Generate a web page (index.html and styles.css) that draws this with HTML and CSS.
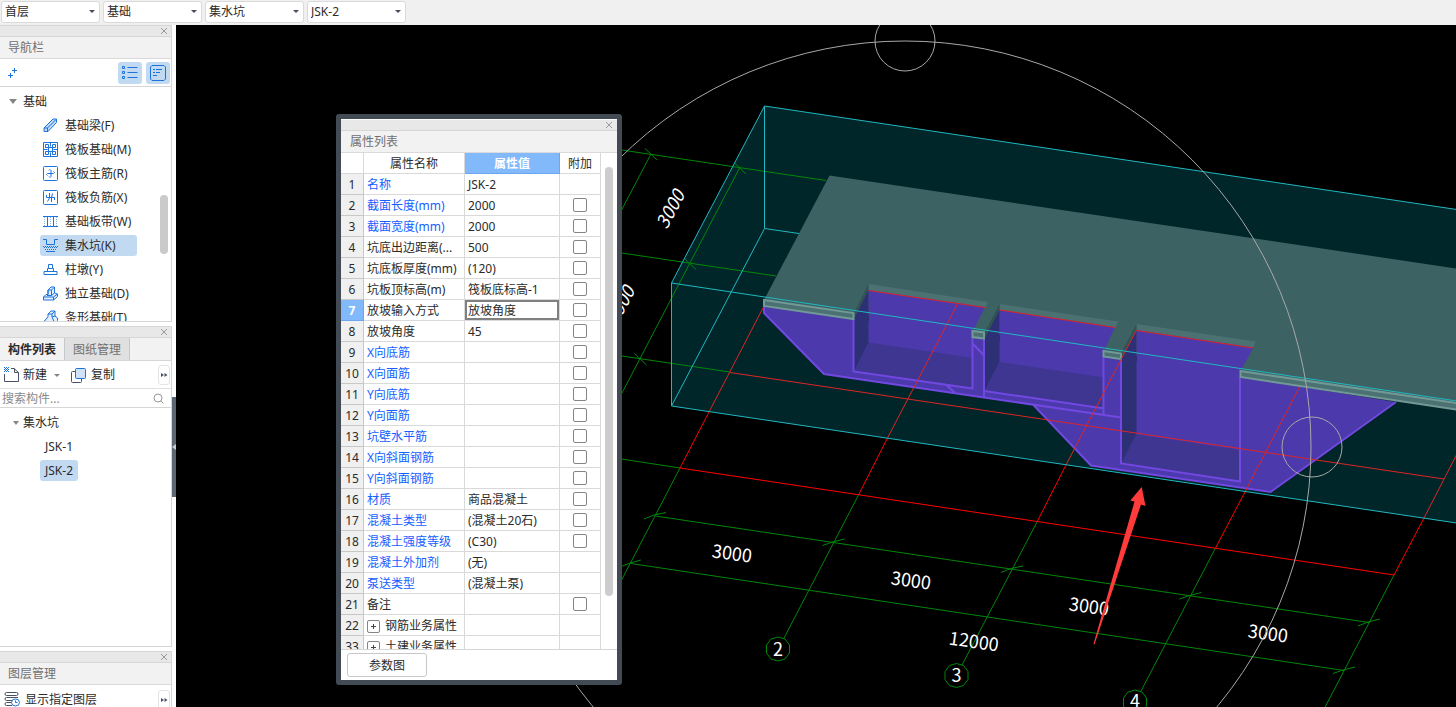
FILE: index.html
```
<!DOCTYPE html>
<html lang="zh-CN">
<head>
<meta charset="utf-8">
<title>集水坑 JSK-2</title>
<link rel="stylesheet" href="styles.css">
</head>
<body>
<header class="topbar">
  <span class="picker"><select aria-label="楼层"><option>首层</option></select></span>
  <span class="picker"><select aria-label="构件分类"><option>基础</option></select></span>
  <span class="picker"><select aria-label="构件类型"><option>集水坑</option></select></span>
  <span class="picker"><select aria-label="构件"><option>JSK-2</option></select></span>
</header>
<main class="workspace">
  <aside class="sidebar">
    <section class="panel panel-nav">
      <div class="grip"><button class="close" aria-label="关闭导航栏"><svg width="8" height="8" viewBox="0 0 8 8"><path d="M1 1l6 6M7 1l-6 6"/></svg></button></div>
      <h2 class="title">导航栏</h2>
      <div class="nav-tools">
        <button class="plain" aria-label="添加"><svg class="ico" width="10" height="12" viewBox="0 0 10 12"><path d="M6.500 1v5M4 3.500h5M2.500 6v5M0 8.500h5"/></svg></button>
        <button class="toggle" aria-label="列表"><svg class="ico" width="16" height="16" viewBox="0 0 16 16"><path d="M5.500 2.500h10M5.500 7.500h10M5.500 12.500h10M.5 1.500h2v2h-2zM.5 6.500h2v2h-2zM.5 11.500h2v2h-2z"/></svg></button>
        <button class="toggle" aria-label="详情"><svg class="ico" width="16" height="16" viewBox="0 0 16 16"><path d="M2 .5h12l1.500 1.500v12L14 15.500H2L.5 14V2z"/><path d="M3 4.500h2M6 4.500h6M3 7.500h2M6 7.500h4M3 10.500h4"/></svg></button>
      </div>
      <div class="tree nav-tree">
        <button class="branch"><i class="caret"></i>基础</button>
        <button class="leaf"><svg class="ico" width="15" height="15" viewBox="0 0 15 15"><path fill="#c2daf1" d="M1 13.500V10L10 1h3.500v3.500L5 13.500zM1 10h3.500v3.500M4.500 10L13 1.500"/></svg>基础梁(F)</button>
        <button class="leaf"><svg class="ico" width="15" height="15" viewBox="0 0 15 15"><path d="M.5.5h14v14H.5zM5.500 5.500h4v4h-4z"/><path d="M2.500 2.500h3v3h-3zM9.500 2.500h3v3h-3zM2.500 9.500h3v3h-3zM9.500 9.500h3v3h-3zM.5 7.500h4M10.500 7.500h4M7.500.5v4M7.500 10.500v4"/></svg>筏板基础(M)</button>
        <button class="leaf"><svg class="ico" width="15" height="15" viewBox="0 0 15 15"><rect x=".5" y=".5" width="14" height="14" rx="1"/><path d="M4.500 9.500l-1-1 1-1h6l1-1-1-1M6 4.500l1-1 1 1v6l-1 1-1-1"/></svg>筏板主筋(R)</button>
        <button class="leaf"><svg class="ico" width="15" height="15" viewBox="0 0 15 15"><rect x=".5" y=".5" width="14" height="14" rx="1"/><path d="M3.500 5v2.500h8V10M6.500 3v5l-2 3.500M9.500 3.500l-1 4V12"/></svg>筏板负筋(X)</button>
        <button class="leaf"><svg class="ico" width="15" height="15" viewBox="0 0 15 15"><path d="M0 2.500h15M0 12.500h15M4.500 2v10M10.500 2v10"/><path opacity=".5" stroke-dasharray="1 1" d="M1.500 3v9M7.500 3v9M13.500 3v9"/></svg>基础板带(W)</button>
        <button class="leaf selected"><svg class="ico" width="15" height="15" viewBox="0 0 15 15"><path d="M0 1.500h3.500v5h8v-5H15M3 13.500h9"/><path stroke-dasharray="1 1" d="M0 8.500h15M1 9.500h13M2 11.500h11"/></svg>集水坑(K)</button>
        <button class="leaf"><svg class="ico" width="15" height="15" viewBox="0 0 15 15"><path d="M1 12.500v-3h13v3zM4.500 9V6.500h1v-4h4v4h1V9M5.500 6.500h4"/></svg>柱墩(Y)</button>
        <button class="leaf"><svg class="ico" width="15" height="15" viewBox="0 0 15 15"><path fill="#e4effb" d="M.5 14v-3L3 8.500h2V4l3-3h3.500v6l3 1v2.500l-4 3.500z"/><path d="M5 8.500V4h3.500v5.500H4M8.500 4L11 1.500M8.500 9.500l3-2.500M.5 11h10l4-3M10.500 11v3"/></svg>独立基础(D)</button>
        <button class="leaf"><svg class="ico" width="15" height="15" viewBox="0 0 15 15"><path fill="#e4effb" d="M.5 14.500v-3L3 9.500l2-3V4l3-3h4v5l2.500 2v2.500l-4 4z"/><path d="M5 4h4l3-3M9 4v3l2 4.500H.5M9 7l3-1"/></svg>条形基础(T)</button>
        <i class="nav-thumb"></i>
      </div>
    </section>
    <section class="panel panel-list">
      <div class="grip"><button class="close" aria-label="关闭构件列表"><svg width="8" height="8" viewBox="0 0 8 8"><path d="M1 1l6 6M7 1l-6 6"/></svg></button></div>
      <div class="tabs"><button class="tab active">构件列表</button><button class="tab">图纸管理</button></div>
      <div class="list-tools">
        <button class="plain"><svg class="ico dark" width="16" height="16" viewBox="0 0 16 16"><path d="M7 1.500h3l4.500 4v9H.5V7M10.500 1.500v4h4"/><path class="blue" stroke-dasharray="1 1" d="M0 .5h5M1 1.500h4M0 2.500h5M1 3.500h4M0 4.500h5"/></svg>新建</button>
        <i class="caret small"></i>
        <button class="plain copy"><svg class="ico dark" width="15" height="15" viewBox="0 0 15 15"><rect x=".5" y="3.500" width="10" height="11" rx="1"/><rect class="blue" fill="#cfe2fa" x="4.500" y=".5" width="10" height="10" rx="1"/></svg>复制</button>
        <button class="more" aria-label="更多"><svg width="8" height="6" viewBox="0 0 8 6"><path d="M1 1l3 2-3 2zM4.500 1l3 2-3 2z"/></svg></button>
      </div>
      <div class="search">
        <input type="text" aria-label="搜索构件" placeholder="搜索构件...">
        <svg width="11" height="11" viewBox="0 0 11 11"><circle cx="5" cy="5" r="4"/><path d="M8 8l2.500 2.500"/></svg>
      </div>
      <div class="tree">
        <button class="branch inner"><i class="caret"></i>集水坑</button>
        <button class="leaf text">JSK-1</button>
        <button class="leaf text selected">JSK-2</button>
      </div>
    </section>
    <section class="panel panel-layers">
      <div class="grip"><button class="close" aria-label="关闭图层管理"><svg width="8" height="8" viewBox="0 0 8 8"><path d="M1 1l6 6M7 1l-6 6"/></svg></button></div>
      <h2 class="title">图层管理</h2>
      <div class="list-tools">
        <button class="plain"><svg class="ico dark" width="16" height="15" viewBox="0 0 16 15"><rect x="1" y=".5" width="13" height="3" rx="1.500"/><path d="M14 5.500H2.500a1.500 1.500 0 0 0 0 3H8M8 10.500H2.500a1.500 1.500 0 0 0 0 3H8"/><g class="blue"><ellipse cx="11.500" cy="10.500" rx="4" ry="3.500" fill="#fff"/><path d="M11.500 8.500v2h2"/></g></svg>显示指定图层</button>
        <button class="more" aria-label="更多"><svg width="8" height="6" viewBox="0 0 8 6"><path d="M1 1l3 2-3 2zM4.500 1l3 2-3 2z"/></svg></button>
      </div>
    </section>
    <button class="collapse" aria-label="收起侧栏"><svg width="4" height="6" viewBox="0 0 4 6"><path fill="#c8ccd0" d="M4 0v6L0 3z"/></svg></button>
  </aside>
  <div class="viewport">
    <svg class="scene" viewBox="176 25 1280 682" preserveAspectRatio="xMinYMin slice" role="img" aria-label="集水坑三维视图">
      <polygon fill="#002629" points="671.500,283 764.500,106 1460,210 1460,523.500 671.500,406"/>
      <g class="axis">
        <path d="M615 149L826 180.500M615 252L776 276M615 355L730 372M615 458L680 468"/>
        <path d="M651 154L620 213M739.500 168L622 393M680 468L620 583M858.500 495L784 638M1037 522L962 665M1215.500 548L1141 691M1394 575L1322 713"/>
        <path d="M655.500 516L1369 622.500M631 563.500L1344 670.500"/>
        <path d="M645 148.500l12 11.500M734 162.500l12 11.500M684 258l12 11.500M634.500 353.500l12 11.500"/>
        <path d="M644 519l10-4 12-2.500M822.500 545.500l10-3.500 12-3M1001 572.500l10-4 12-2.500M1179.500 599l10-3.500 12-3M1358 626l10-4 12-3M620 567l10-4 11-3M1333 673.500l10-3.500 12-3"/>
      </g>
      <polygon fill="#3d6264" points="829.500,175.500 1460,269 1460,404 764,300"/>
      <polygon fill="#4c39ac" points="763.500,306 1240,377 1396,402 1270.500,492 1091,465.500 1033,405 824,374 763.500,313"/>
      <!-- first pit -->
      <polygon fill="#4c7173" points="868.500,284 988,302 985,308 868.500,291"/>
      <polygon fill="#315354" points="868.500,284 868.500,291 854,321 854,313"/>
      <polygon fill="#4c39ac" points="868.500,290 985,307 973,331 973,358 868.500,342.500"/>
      <polygon fill="#2d3074" points="868.500,290 868.500,342.500 854,372 854,319"/>
      <polygon fill="#3e3690" points="868.500,342.500 973,358 973,389 854,371.500"/>
      <!-- second pit -->
      <polygon fill="#4c7173" points="999.500,304 1118.500,321.500 1115,328 999.500,310.500"/>
      <polygon fill="#315354" points="999.500,304 999.500,310.500 984.500,340 984.500,332.500"/>
      <polygon fill="#4c39ac" points="999.500,310 1115,327 1104,351 1104,378 999.500,362"/>
      <polygon fill="#2d3074" points="999.500,310 999.500,362 984.500,391 984.500,339"/>
      <polygon fill="#3e3690" points="999.500,362 1104,377.500 1104,409 984.500,391"/>
      <!-- third pit -->
      <polygon fill="#4c7173" points="1136.500,324 1256,341.500 1253,348 1136.500,330.500"/>
      <polygon fill="#315354" points="1136.500,324 1136.500,331 1121,360 1121,353"/>
      <polygon fill="#4c39ac" points="1136.500,330 1253.500,347.500 1240,372 1240,450 1136.500,434.500"/>
      <polygon fill="#2d3074" points="1136.500,330 1136.500,434.500 1121,464 1121,359"/>
      <polygon fill="#3e3690" points="1136.500,434.500 1240,450 1240,482 1121,464"/>
      <g class="edge">
        <path d="M764 306v7L824 374l297 43.500M1033 404.500l58 61 179.500 26.500L1396 402"/>
        <path d="M853.500 319v52.500L972.500 388.500v-51M984 338v59M984.500 391l119.500 17.500M1103.500 357v57M1121 358v105.500L1240 481.500V377"/>
        <path d="M973 344l11.500 12M947 385.500l8 7.500"/>
      </g>
      <g class="slab">
        <polygon points="764,300 853.500,313 853.500,319 764,306"/>
        <polygon points="972.500,331 984,332.500 984,338.500 972.500,337"/>
        <polygon points="1103.500,351 1121,353.500 1121,359 1103.500,356.500"/>
        <polygon points="1240.500,371 1460,403.500 1460,410 1240.500,377"/>
      </g>
      <path class="grid-in" d="M763.500 307L709 412M958 303l-70 134M1136.500 330l-70 134M1299.500 387l-54 104M1460 448l-36 70M730 372.500L1444 479M868.500 290.500L985 307.500M999.500 310L1115 327.500M1136.500 330.500L1253 348"/>
      <path class="grid-out" d="M709 412l-29 56M888 437l-29.500 58M1066.500 464l-29.500 58M1245.500 491l-30 57M1424 518l-30 57M680 468l714 107"/>
      <path class="box" d="M1460 210L764.500 106v122.500L799 233.500M764.500 106L671.500 283v123L764.500 228.500M671.500 283L1460 401.500M671.500 406L1460 523.500"/>
      <g class="axis bubbles">
        <polygon points="778,637 785,639 789.500,645 789.500,653 785,659 778,661 771,659 766.500,653 766.500,645 771,639"/>
        <polygon points="956.500,663.500 963.500,665.500 968,671.500 968,679.500 963.500,685.500 956.500,687.500 949.500,685.500 945,679.500 945,671.500 949.500,665.500"/>
        <polygon points="1135,690 1142,692 1146.500,698 1146.500,706 1142,712 1135,714 1128,712 1123.500,706 1123.500,698 1128,692"/>
      </g>
      <g class="dims">
        <text x="778" y="656">2</text>
        <text x="956.500" y="682">3</text>
        <text x="1135" y="708">4</text>
        <text transform="translate(732 553) rotate(8)" y="7">3000</text>
        <text transform="translate(911 580) rotate(8)" y="7">3000</text>
        <text transform="translate(1089 606) rotate(8)" y="7">3000</text>
        <text transform="translate(1268 633) rotate(8)" y="7">3000</text>
        <text transform="translate(974 641) rotate(8)" y="7">12000</text>
        <text class="lean" transform="translate(670 209) rotate(-62)" y="7">3000</text>
        <text class="lean" transform="translate(620 305) rotate(-62)" y="7">3000</text>
      </g>
      <g class="orbit">
        <circle cx="905" cy="447" r="406"/>
        <circle cx="905" cy="41" r="30"/>
        <circle cx="1312" cy="447" r="30"/>
      </g>
      <polygon fill="#ff3b3b" points="1141.700,487 1145.500,506 1141,504.500 1094.500,644.500 1093.500,644 1134.500,501.500 1130.300,500.500"/>
    </svg>
    <section class="dialog" aria-label="属性列表">
      <div class="grip"><button class="close" aria-label="关闭属性列表"><svg width="8" height="8" viewBox="0 0 8 8"><path d="M1 1l6 6M7 1l-6 6"/></svg></button></div>
      <h2 class="title">属性列表</h2>
      <div class="sheet">
        <table class="props">
          <colgroup><col class="c-num"><col class="c-name"><col class="c-value"><col class="c-add"></colgroup>
          <thead><tr><th></th><th>属性名称</th><th class="current">属性值</th><th>附加</th></tr></thead>
          <tbody>
            <tr><th>1</th><td class="pub">名称</td><td>JSK-2</td><td></td></tr>
            <tr><th>2</th><td class="pub">截面长度(mm)</td><td>2000</td><td><input type="checkbox" aria-label="附加 截面长度"></td></tr>
            <tr><th>3</th><td class="pub">截面宽度(mm)</td><td>2000</td><td><input type="checkbox" aria-label="附加 截面宽度"></td></tr>
            <tr><th>4</th><td>坑底出边距离(...</td><td>500</td><td><input type="checkbox" aria-label="附加 坑底出边距离"></td></tr>
            <tr><th>5</th><td>坑底板厚度(mm)</td><td>(120)</td><td><input type="checkbox" aria-label="附加 坑底板厚度"></td></tr>
            <tr><th>6</th><td>坑板顶标高(m)</td><td>筏板底标高-1</td><td><input type="checkbox" aria-label="附加 坑板顶标高"></td></tr>
            <tr class="active"><th>7</th><td>放坡输入方式</td><td class="focus">放坡角度</td><td><input type="checkbox" aria-label="附加 放坡输入方式"></td></tr>
            <tr><th>8</th><td>放坡角度</td><td>45</td><td><input type="checkbox" aria-label="附加 放坡角度"></td></tr>
            <tr><th>9</th><td class="pub">X向底筋</td><td></td><td><input type="checkbox" aria-label="附加 X向底筋"></td></tr>
            <tr><th>10</th><td class="pub">X向面筋</td><td></td><td><input type="checkbox" aria-label="附加 X向面筋"></td></tr>
            <tr><th>11</th><td class="pub">Y向底筋</td><td></td><td><input type="checkbox" aria-label="附加 Y向底筋"></td></tr>
            <tr><th>12</th><td class="pub">Y向面筋</td><td></td><td><input type="checkbox" aria-label="附加 Y向面筋"></td></tr>
            <tr><th>13</th><td class="pub">坑壁水平筋</td><td></td><td><input type="checkbox" aria-label="附加 坑壁水平筋"></td></tr>
            <tr><th>14</th><td class="pub">X向斜面钢筋</td><td></td><td><input type="checkbox" aria-label="附加 X向斜面钢筋"></td></tr>
            <tr><th>15</th><td class="pub">Y向斜面钢筋</td><td></td><td><input type="checkbox" aria-label="附加 Y向斜面钢筋"></td></tr>
            <tr><th>16</th><td class="pub">材质</td><td>商品混凝土</td><td><input type="checkbox" aria-label="附加 材质"></td></tr>
            <tr><th>17</th><td class="pub">混凝土类型</td><td>(混凝土20石)</td><td><input type="checkbox" aria-label="附加 混凝土类型"></td></tr>
            <tr><th>18</th><td class="pub">混凝土强度等级</td><td>(C30)</td><td><input type="checkbox" aria-label="附加 混凝土强度等级"></td></tr>
            <tr><th>19</th><td class="pub">混凝土外加剂</td><td>(无)</td><td></td></tr>
            <tr><th>20</th><td class="pub">泵送类型</td><td>(混凝土泵)</td><td></td></tr>
            <tr><th>21</th><td>备注</td><td></td><td><input type="checkbox" aria-label="附加 备注"></td></tr>
            <tr><th>22</th><td><button class="expand" aria-label="展开钢筋业务属性"></button>钢筋业务属性</td><td></td><td></td></tr>
            <tr><th>33</th><td><button class="expand" aria-label="展开土建业务属性"></button>土建业务属性</td><td></td><td></td></tr>
          </tbody>
        </table>
        <div class="track"><i class="thumb"></i></div>
      </div>
      <footer class="actions"><button class="param">参数图</button></footer>
    </section>
  </div>
</main>
</body>
</html>
```
FILE: styles.css
```
* { box-sizing: border-box; }

body {
  margin: 0;
  height: 100vh;
  display: flex;
  flex-direction: column;
  overflow: hidden;
  background: #fff;
  color: #2b2b2b;
  font: 12px/20px "Noto Sans", "Noto Sans CJK SC", sans-serif;
}

button, input, select {
  font: inherit;
  color: inherit;
  margin: 0;
}

button {
  border: 0;
  padding: 0;
  background: none;
  white-space: nowrap;
}

.topbar {
  flex: none;
  display: flex;
  gap: 3px;
  height: 25px;
  padding: 1px;
  background: #f0f0f0;
}

.picker {
  position: relative;
  width: 99px;
  height: 22px;
}

.picker select {
  appearance: none;
  width: 100%;
  height: 100%;
  padding: 0 16px 0 3px;
  border: 1px solid #dadada;
  border-radius: 3px;
  background: #fff;
}

.picker::after {
  content: "";
  position: absolute;
  right: 5px;
  top: 9px;
  border: 3px solid transparent;
  border-top-color: #454c5c;
  border-bottom: 0;
}

.workspace {
  flex: 1;
  display: flex;
  min-height: 0;
}

.sidebar {
  position: relative;
  flex: none;
  width: 176px;
  padding-right: 4px;
  display: flex;
  flex-direction: column;
  gap: 4px;
}

.panel {
  display: flex;
  flex-direction: column;
  overflow: hidden;
  border: 1px solid #d6d6d6;
  border-left: 0;
}

.panel-nav { flex: 0 0 297px; }
.panel-list { flex: 1; }
.panel-layers { flex: 0 0 56px; border-bottom: 0; }

.grip {
  flex: none;
  display: flex;
  justify-content: flex-end;
  align-items: center;
  height: 11px;
  padding-right: 3px;
  background: #e8e8e8;
  border-bottom: 1px solid #d6d6d6;
}

.close { display: flex; }
.close path { fill: none; stroke: #999; }

.title {
  flex: none;
  margin: 0;
  height: 22px;
  padding-left: 8px;
  font-size: 12px;
  font-weight: 400;
  line-height: 22px;
  color: #707070;
  background: #f2f2f2;
  border-bottom: 1px solid #dadada;
}

.ico {
  flex: none;
  fill: none;
  stroke: #1c73dc;
}

.dark { stroke: #485264; }
.blue { stroke: #1c73dc; }

.nav-tools {
  flex: none;
  display: flex;
  align-items: center;
  gap: 4px;
  height: 28px;
  padding: 0 1px 0 8px;
  border-bottom: 1px solid #d6d6d6;
}

.nav-tools .plain { margin-right: auto; }

.plain {
  display: flex;
  align-items: center;
  gap: 4px;
}

.toggle {
  display: grid;
  place-items: center;
  width: 24px;
  height: 22px;
  border-radius: 3px;
  background: #c2daf1;
}

.tree {
  flex: 1;
  position: relative;
  display: flex;
  flex-direction: column;
  align-items: flex-start;
  gap: 3px;
  min-height: 0;
  padding-top: 4px;
  overflow: hidden;
}

.branch, .leaf {
  flex: none;
  display: flex;
  align-items: center;
  height: 21px;
}

.branch { margin-left: 9px; gap: 6px; }
.branch.inner { margin-left: 13px; gap: 4px; }

.leaf {
  margin-left: 40px;
  padding: 0 21px 0 3px;
  gap: 7px;
  border-radius: 3px;
}

.leaf.text { padding: 0 5px; }
.selected { background: #c2daf1; }

.caret {
  border: 4px solid transparent;
  border-top: 5px solid #858585;
  border-bottom: 0;
}

.inner .caret { border-width: 4px 3px 0; }
.small { border-width: 3px 3px 0; }

.nav-thumb {
  position: absolute;
  right: 3px;
  top: 108px;
  width: 8px;
  height: 59px;
  border-radius: 4px;
  background: #cacaca;
}

.tabs {
  flex: none;
  display: flex;
  height: 23px;
  background: #f2f2f2;
  border-bottom: 1px solid #d6d6d6;
}

.tab {
  flex: none;
  padding: 1px 8px 0;
  border-right: 1px solid #c4c8cd;
  background: #e0e0e0;
  color: #707070;
}

.tab.active {
  background: #f2f2f2;
  color: #2b2b2b;
  font-weight: 700;
}

.list-tools {
  flex: none;
  display: flex;
  align-items: center;
  height: 28px;
  padding: 1px 1px 0 4px;
  border-bottom: 1px solid #e0e0e0;
}

.list-tools .plain { gap: 3px; }
.panel-layers .list-tools { border: 0; }
.panel-layers .plain { gap: 5px; }
.list-tools .small { margin-left: 7px; }
.list-tools .copy { margin-left: 11px; gap: 5px; }

.more {
  display: grid;
  place-items: center;
  margin-left: auto;
  width: 12px;
  height: 20px;
  border: 1px solid #e4e4e4;
  border-radius: 3px;
}

.more path { fill: #485264; }

.search {
  flex: none;
  display: flex;
  align-items: center;
  height: 19px;
  padding: 0 7px 0 2px;
  border-bottom: 1px solid #d6d6d6;
}

.search input {
  flex: 1;
  min-width: 0;
  height: 18px;
  padding: 1px 0 0;
  border: 0;
  outline: 0;
}

.search input::placeholder { color: #8a8a8a; }
.search svg { fill: none; stroke: #999; }

.collapse {
  position: absolute;
  right: 0;
  top: 372px;
  width: 4px;
  height: 100px;
  display: grid;
  place-items: center;
  background: #5d6773;
}

.viewport {
  flex: 1;
  position: relative;
  min-width: 0;
  overflow: hidden;
  background: #000;
}

.scene {
  display: block;
  width: 100%;
  height: 100%;
}

.axis { fill: none; stroke: #00870a; }
.edge { fill: none; stroke: #7148e0; stroke-width: 2; }
.slab { fill: #4c7173; stroke: #7199a0; stroke-width: 2; }
.slab { stroke: #719996; }
.box { fill: none; stroke: #20b8c0; }
.grid-in { fill: none; stroke: #dc2626; }
.grid-out { fill: none; stroke: #f00; }
.orbit { fill: none; stroke: #a8a8a8; }

.dims {
  fill: #fff;
  font: 18px "Noto Sans CJK SC", sans-serif;
  text-anchor: middle;
}

.lean { font-style: italic; }

.dialog {
  position: absolute;
  left: 160px;
  top: 89px;
  width: 286px;
  border: 5px solid #424a53;
  border-radius: 3px;
  background: #fff;
}

.dialog .grip { height: 12px; padding-right: 4px; border-top: 1px solid #fff; }
.dialog .title { padding-left: 9px; }

.sheet {
  display: flex;
  height: 497px;
  overflow: hidden;
  border-bottom: 1px solid #d6d6d6;
}

.props {
  flex: none;
  width: 260px;
  table-layout: fixed;
  border-collapse: separate;
  border-spacing: 0;
}

.c-num { width: 23px; }
.c-name { width: 101px; }
.c-value { width: 95px; }
.c-add { width: 41px; }

.props th, .props td {
  height: 21px;
  padding: 2px 0 0 3px;
  border-right: 1px solid #d9d9d9;
  border-bottom: 1px solid #d9d9d9;
  text-align: left;
  font-weight: 400;
  line-height: 18px;
  white-space: nowrap;
}

.props th {
  padding-left: 0;
  text-align: center;
}

.props tbody th {
  background: #f0f0f0;
  border-color: #c8c8c8;
}

.props td:last-child { padding: 0; }

.props thead .current, .props .active th {
  background: #82b9fb;
  border-color: #6aa7ee;
  color: #fff;
  font-weight: 700;
}

.props .pub { color: #1560ff; }
.props .focus { box-shadow: inset 0 0 0 2px #808080; }

.props input {
  appearance: none;
  display: block;
  width: 14px;
  height: 14px;
  margin: 0 auto;
  border: 1px solid #858585;
  border-radius: 2px;
  background: #fff;
}

.expand {
  display: inline-block;
  width: 13px;
  height: 13px;
  margin-right: 5px;
  vertical-align: -2px;
  border: 1px solid #858585;
  border-radius: 2px;
  background:
    linear-gradient(#444, #444) center / 5px 1px no-repeat,
    linear-gradient(#444, #444) center / 1px 5px no-repeat;
}

.track {
  flex: 1;
  padding: 14px 0 0 4px;
}

.thumb {
  display: block;
  width: 8px;
  height: 429px;
  border-radius: 4px;
  background: #cdcdcd;
}

.actions { padding: 3px 6px; }

.param {
  display: block;
  width: 80px;
  height: 24px;
  padding-top: 1px;
  border: 1px solid #c8c8c8;
  border-radius: 3px;
}
```
